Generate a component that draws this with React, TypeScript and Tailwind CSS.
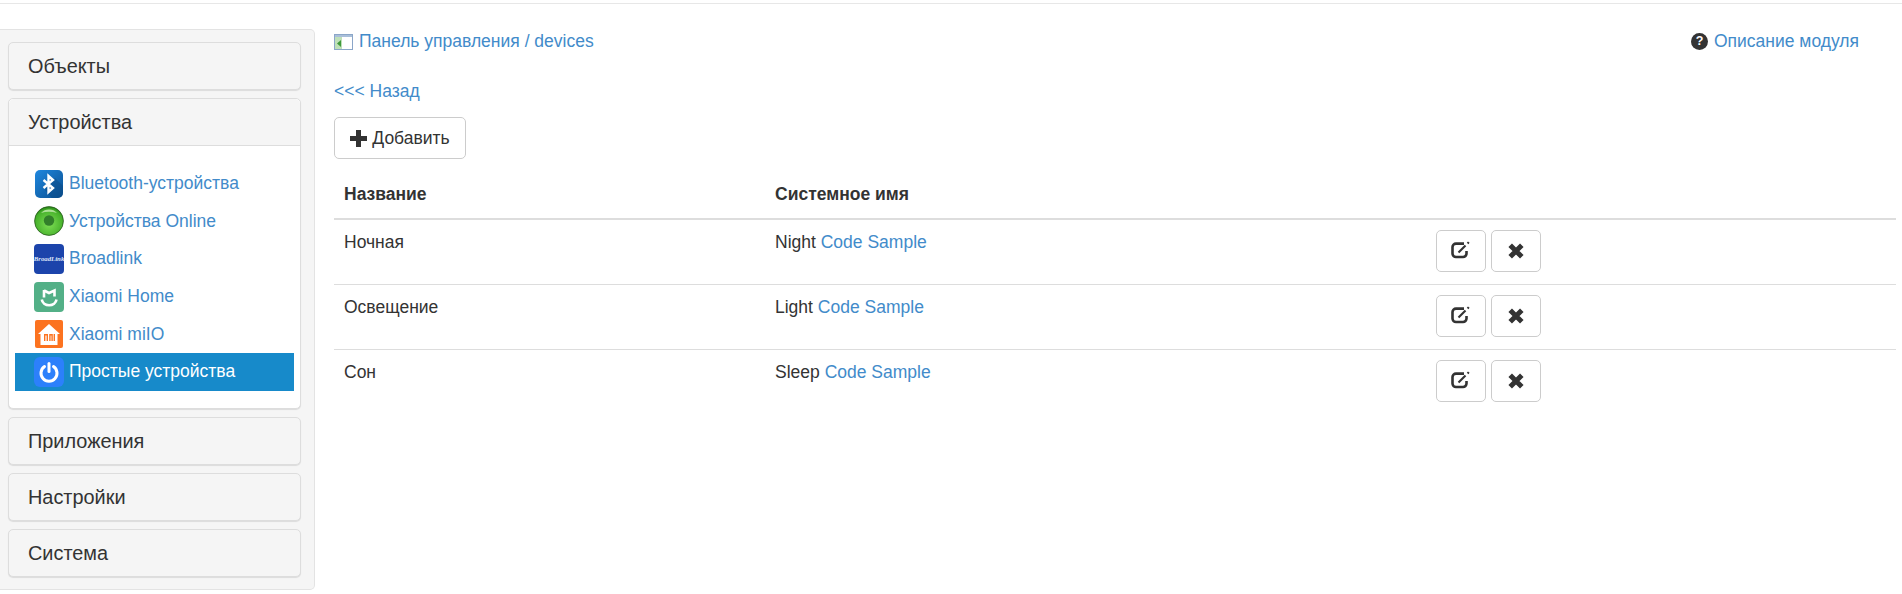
const link = "text-[#428bca]";

function BluetoothIcon() {
  return (
    <svg viewBox="0 0 28 28" className="h-[28px] w-[28px]">
      <defs>
        <linearGradient id="bt" x1="0" y1="0" x2="1" y2="1">
          <stop offset="0" stopColor="#1f88e0" />
          <stop offset="1" stopColor="#0b4f8f" />
        </linearGradient>
      </defs>
      <rect width="28" height="28" rx="5" fill="url(#bt)" />
      <path d="M14 14 L20 8 L28 16 V23 A5 5 0 0 1 23 28 H17 L10 20 Z" fill="#0a4a85" opacity=".5" />
      <path d="M8.5 10 L18 18 L13.5 22 V6 L18 10 L8.5 18" fill="none" stroke="#fff" strokeWidth="2.4" />
    </svg>
  );
}

function OnlineIcon() {
  return (
    <svg viewBox="0 0 30 30" className="h-[30px] w-[30px]">
      <defs>
        <radialGradient id="on" cx="50%" cy="60%" r="58%">
          <stop offset="0" stopColor="#7ede55" />
          <stop offset=".85" stopColor="#45b02a" />
          <stop offset="1" stopColor="#2a8a18" />
        </radialGradient>
      </defs>
      <circle cx="15" cy="15" r="14.4" fill="url(#on)" stroke="#2a5a20" strokeWidth=".8" />
      <circle cx="15" cy="14.5" r="5.2" fill="#327f2a" />
      <path d="M7 7 A11 11 0 0 1 23 7 A16 9 0 0 0 7 7Z" fill="#d8f5c4" opacity=".7" />
    </svg>
  );
}

function BroadlinkIcon() {
  return (
    <div className="flex h-[30px] w-[30px] items-center justify-center overflow-hidden rounded-[4px] bg-[#1c44ab]">
      <span className="font-['Liberation_Serif'] text-[6.8px] font-bold italic leading-none text-[#dfe6f7]">BroadLink</span>
    </div>
  );
}

function XiaomiHomeIcon() {
  return (
    <svg viewBox="0 0 30 30" className="h-[30px] w-[30px]">
      <rect width="30" height="30" rx="4" fill="#53b087" />
      <path d="M10 8.5 L15 11 L20.5 8.5 V14.5" fill="none" stroke="#fff" strokeWidth="2.6" />
      <path d="M10 8 V15.5" fill="none" stroke="#fff" strokeWidth="2.6" />
      <path d="M7.8 17.5 A7.4 6.5 0 0 0 22.5 17.5" fill="none" stroke="#fff" strokeWidth="2.6" />
    </svg>
  );
}

function MiioIcon() {
  return (
    <svg viewBox="0 0 28 28" className="h-[28px] w-[28px]">
      <rect width="28" height="28" rx="2" fill="#fc7320" />
      <path d="M14 4 L25 14 H22.5 V25 H5.5 V14 H3 Z" fill="#fff" />
      <path d="M9 14 H13 V21 H11.6 V15.5 H10.4 V21 H9 Z M14.2 14 H17.8 V21 H16.4 V15.5 H15.6 V21 H14.2 Z M18.6 14 H20 V21 H18.6 Z" fill="#fc7320" />
    </svg>
  );
}

function PowerIcon() {
  return (
    <svg viewBox="0 0 30 30" className="h-[30px] w-[30px]">
      <rect width="30" height="30" rx="6" fill="#2c80fb" />
      <path d="M10.5 9.6 A8 8 0 1 0 19.5 9.6" fill="none" stroke="#fff" strokeWidth="3" strokeLinecap="round" />
      <path d="M15 6.5 V14.5" fill="none" stroke="#fff" strokeWidth="3" strokeLinecap="round" />
    </svg>
  );
}

function BreadcrumbIcon() {
  return (
    <svg viewBox="0 0 19 16" className="h-[16px] w-[19px]">
      <rect x=".5" y=".5" width="18" height="15" fill="#fff" stroke="#8ba6c8" />
      <rect x="1" y="1" width="17" height="2" fill="#a9bfd9" />
      <rect x="1" y="3" width="7" height="12" fill="#bfe0b8" />
      <path d="M7 6 L3 9.5 L7 13 Z" fill="#3f9a3a" />
    </svg>
  );
}

function PlusIcon() {
  return (
    <svg viewBox="0 0 17 17" className="h-[17px] w-[17px]">
      <path d="M6 0 H11 V6 H17 V11 H11 V17 H6 V11 H0 V6 H6 Z" fill="#333" />
    </svg>
  );
}

function CloseIcon() {
  return (
    <svg viewBox="0 0 18 18" className="h-[18px] w-[18px]">
      <path d="M3.2 3.2 L14.8 14.8 M14.8 3.2 L3.2 14.8" fill="none" stroke="#333" strokeWidth="5" />
    </svg>
  );
}

function EditIcon() {
  return (
    <svg viewBox="0 0 20 18" className="-mt-[2px] h-[18px] w-[20px]">
      <path d="M13 2.6 H5 A3.5 3.5 0 0 0 1.5 6.1 V12.5 A3.5 3.5 0 0 0 5 16 H12 A3.5 3.5 0 0 0 15.5 12.5 V10" fill="none" stroke="#333" strokeWidth="2.6" />
      <path d="M7.5 11.5 L14.5 4.5" fill="none" stroke="#333" strokeWidth="2.2" />
      <path d="M17 .4 L18.6 1.8 L17.4 3.2 L15.8 1.8 Z" fill="#333" />
    </svg>
  );
}

function QuestionIcon() {
  return (
    <div className="flex h-[17px] w-[17px] items-center justify-center rounded-full bg-[#333] text-[12.5px] font-bold leading-none text-white">
      ?
    </div>
  );
}

const sideItems = [
  { title: "Bluetooth-устройства", icon: <BluetoothIcon /> },
  { title: "Устройства Online", icon: <OnlineIcon /> },
  { title: "Broadlink", icon: <BroadlinkIcon /> },
  { title: "Xiaomi Home", icon: <XiaomiHomeIcon /> },
  { title: "Xiaomi miIO", icon: <MiioIcon /> },
];

const rows = [
  { name: "Ночная", system: "Night" },
  { name: "Освещение", system: "Light" },
  { name: "Сон", system: "Sleep" },
];

function PanelHeading({ title }: { title: string }) {
  return <div className="flex h-[46px] items-center px-[19px] pt-[2px] text-[19.9px] text-[#333]">{title}</div>;
}

function Panel({ title }: { title: string }) {
  return (
    <div className="h-[48px] rounded-[5px] border border-[#ddd] bg-[#f5f5f5] shadow-[0_1px_1px_rgba(0,0,0,0.1)]">
      <PanelHeading title={title} />
    </div>
  );
}

function Sidebar() {
  return (
    <aside className="flex h-[561px] w-[315px] shrink-0 flex-col gap-[8px] rounded-r-[5px] border border-l-0 border-[#e3e3e3] bg-[#f5f5f5] pb-[12px] pl-[8px] pr-[13px] pt-[12px]">
      <Panel title="Объекты" />
      <div className="rounded-[5px] border border-[#ddd] bg-white shadow-[0_1px_1px_rgba(0,0,0,0.1)]">
        <div className="rounded-t-[5px] border-b border-[#ddd] bg-[#f5f5f5]">
          <PanelHeading title="Устройства" />
        </div>
        <div className="px-[6px] pb-[17px] pt-[19px]">
          {sideItems.map((item) => (
            <div key={item.title} className={`flex h-[37.6px] items-center text-[17.5px] ${link}`}>
              <div className="flex w-[61px] justify-center pl-[7px]">{item.icon}</div>
              <span className="-ml-[7px] pb-[1px]">{item.title}</span>
            </div>
          ))}
          <div className="flex h-[38px] items-center bg-[#178aca] text-[17.5px] text-white">
            <div className="flex w-[61px] justify-center pl-[7px]">
              <PowerIcon />
            </div>
            <span className="-ml-[7px] pb-[1px]">Простые устройства</span>
          </div>
        </div>
      </div>
      <Panel title="Приложения" />
      <Panel title="Настройки" />
      <Panel title="Система" />
    </aside>
  );
}

function ActionButton({ children }: { children: React.ReactNode }) {
  return (
    <button className="flex h-[42px] w-[50px] items-center justify-center rounded-[5px] border border-[#ccc] bg-white text-[#333]">
      {children}
    </button>
  );
}

export default function App() {
  return (
    <div className="h-[594px] w-[1902px] overflow-hidden bg-white font-['Liberation_Sans',Arial,sans-serif]">
      <div className="h-[4px] border-b border-[#e7e7e7]" />
      <div className="flex items-start pt-[25px]">
        <Sidebar />
        <main className="ml-[19px] flex-1 pr-[6px] text-[17.5px] leading-[25px] text-[#333]">
          <div className="flex items-center justify-between pr-[37px]">
            <div className={`flex items-center gap-[6px] ${link}`}>
              <BreadcrumbIcon />
              <span>Панель управления / devices</span>
            </div>
            <div className={`flex items-center gap-[6px] ${link}`}>
              <QuestionIcon />
              <span>Описание модуля</span>
            </div>
          </div>
          <div className={`mt-[25px] ${link}`}>&lt;&lt;&lt; Назад</div>
          <button className="mt-[13px] flex h-[42px] w-[132px] items-center justify-center gap-[5px] rounded-[5px] border border-[#ccc] bg-white">
            <PlusIcon />
            <span>Добавить</span>
          </button>
          <table className="mt-[10px] w-full table-fixed border-collapse text-left">
            <thead>
              <tr className="h-[50px] border-b-[2.5px] border-[#ddd]">
                <th className="w-[441px] pl-[10px] pt-[2px] font-bold">Название</th>
                <th className="pt-[2px] font-bold">Системное имя</th>
                <th className="w-[471px]" />
              </tr>
            </thead>
            <tbody>
              {rows.map((row) => (
                <tr key={row.name} className="h-[65px] border-b border-[#ddd] last:border-b-0">
                  <td className="pl-[10px] pt-[10px] align-top">{row.name}</td>
                  <td className="pt-[10px] align-top">
                    {row.system} <span className={link}>Code Sample</span>
                  </td>
                  <td className="pt-[10px] align-top">
                    <div className="flex gap-[5px] pl-[11px]">
                      <ActionButton>
                        <EditIcon />
                      </ActionButton>
                      <ActionButton>
                        <CloseIcon />
                      </ActionButton>
                    </div>
                  </td>
                </tr>
              ))}
            </tbody>
          </table>
        </main>
      </div>
    </div>
  );
}
